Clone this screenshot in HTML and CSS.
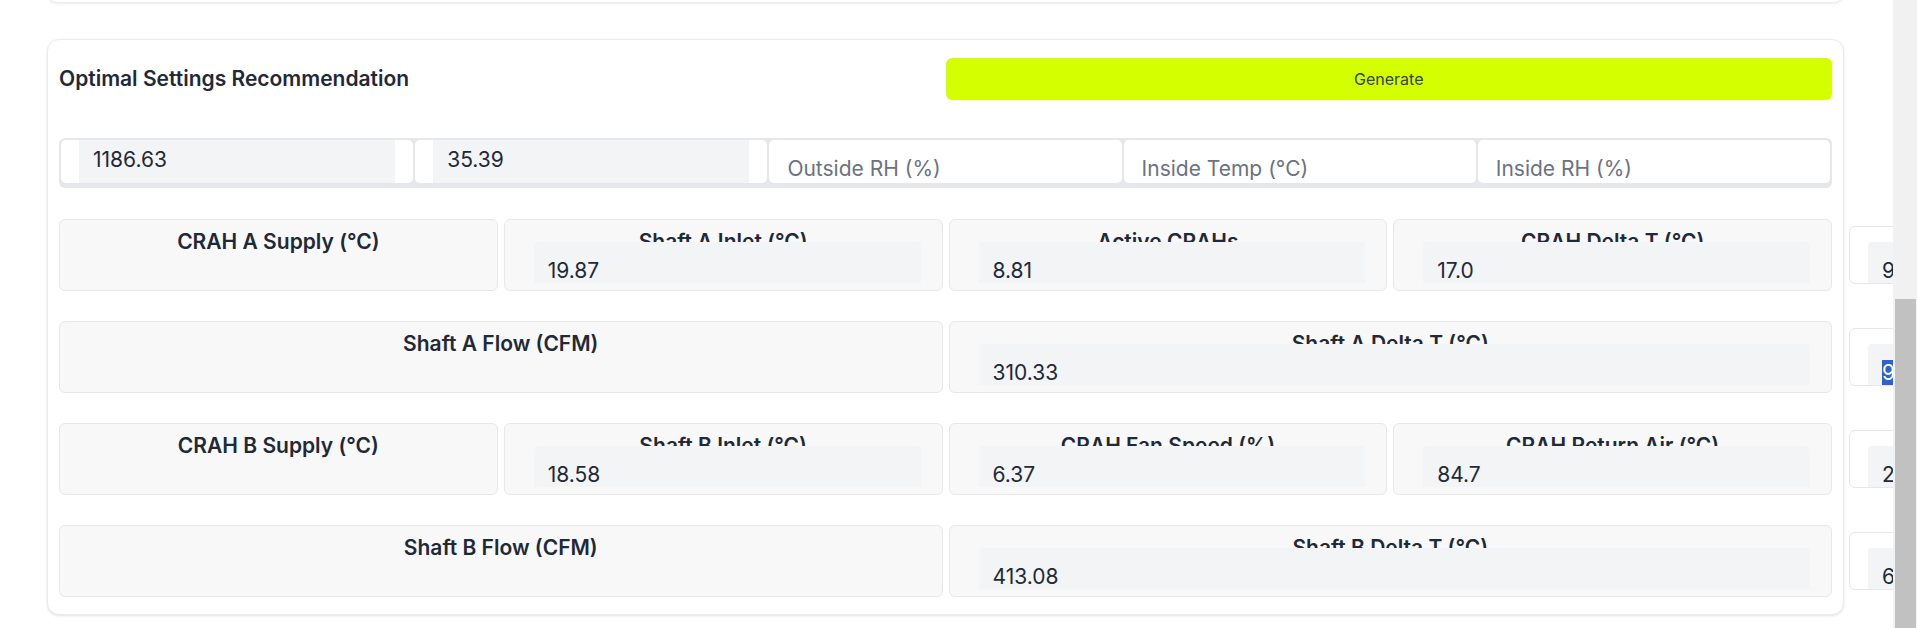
FILE: index.html
```html
<!DOCTYPE html>
<html lang="en">
<head>
<meta charset="utf-8">
<title>Optimal Settings Recommendation</title>
<link rel="stylesheet" href="styles.css">
</head>
<body>
<div class="viewport">
  <main class="page">
    <div class="prev-card"></div>
    <section class="card">
      <div class="card-head">
        <h2 class="title">Optimal Settings Recommendation</h2>
        <button class="btn" type="button">Generate</button>
      </div>
      <div class="inputs">
        <div class="in-box"><div class="in-fill">1186.63</div></div>
        <div class="in-box"><div class="in-fill">35.39</div></div>
        <div class="in-box"><div class="in-ph">Outside RH (%)</div></div>
        <div class="in-box"><div class="in-ph">Inside Temp (°C)</div></div>
        <div class="in-box"><div class="in-ph">Inside RH (%)</div></div>
      </div>

      <div class="row">
        <div class="grid grid-4">
          <div class="cell"><div class="label">CRAH A Supply (°C)</div></div>
          <div class="cell"><div class="label">Shaft A Inlet (°C)</div><div class="val">19.87</div></div>
          <div class="cell"><div class="label">Active CRAHs</div><div class="val">8.81</div></div>
          <div class="cell"><div class="label">CRAH Delta T (°C)</div><div class="val">17.0</div></div>
        </div>
        <div class="extra"><div class="extra-val">9</div></div>
      </div>

      <div class="row">
        <div class="grid grid-2">
          <div class="cell"><div class="label">Shaft A Flow (CFM)</div></div>
          <div class="cell"><div class="label">Shaft A Delta T (°C)</div><div class="val">310.33</div></div>
        </div>
        <div class="extra"><div class="extra-val"><span class="sel">9</span></div></div>
      </div>

      <div class="row">
        <div class="grid grid-4">
          <div class="cell"><div class="label">CRAH B Supply (°C)</div></div>
          <div class="cell"><div class="label">Shaft B Inlet (°C)</div><div class="val">18.58</div></div>
          <div class="cell"><div class="label">CRAH Fan Speed (%)</div><div class="val">6.37</div></div>
          <div class="cell"><div class="label">CRAH Return Air (°C)</div><div class="val">84.7</div></div>
        </div>
        <div class="extra"><div class="extra-val">2</div></div>
      </div>

      <div class="row">
        <div class="grid grid-2">
          <div class="cell"><div class="label">Shaft B Flow (CFM)</div></div>
          <div class="cell"><div class="label">Shaft B Delta T (°C)</div><div class="val">413.08</div></div>
        </div>
        <div class="extra"><div class="extra-val">6</div></div>
      </div>
    </section>
  </main>
  <div class="scrollbar"><div class="thumb"></div></div>
</div>
</body>
</html>
```
FILE: styles.css
```css
* { box-sizing: border-box; }

html, body {
  margin: 0;
  padding: 0;
  height: 100%;
  overflow: hidden;
  background: #ffffff;
  font-family: Inter, "Noto Sans", "Liberation Sans", sans-serif;
  color: #1f2937;
}

.viewport {
  display: flex;
  height: 628px;
  width: 100%;
}

.page {
  flex: 1;
  min-width: 0;
  overflow: hidden;
  padding: 0 49px 0 47px;
}

.prev-card {
  height: 20px;
  margin-top: -17px;
  margin-bottom: 36px;
  background: #fff;
  border: 1px solid #ececec;
  border-radius: 12px;
  box-shadow: 0 1px 3px rgba(0, 0, 0, 0.08);
}

.card {
  background: #fff;
  border: 1px solid #ebebeb;
  border-radius: 12px;
  box-shadow: 0 1px 3px rgba(0, 0, 0, 0.08), 0 1px 2px rgba(0, 0, 0, 0.04);
  padding: 18px 11px 17px 11px;
}

.card-head {
  display: grid;
  grid-template-columns: 1fr 1fr;
  align-items: center;
}

.title {
  margin: 0;
  font-size: 21px;
  font-weight: 600;
  line-height: 28px;
  color: #1f2937;
}

.btn {
  height: 42px;
  border: none;
  border-radius: 6px;
  background: #d4ff00;
  font-family: Inter, "Noto Sans", "Liberation Sans", sans-serif;
  font-size: 16px;
  color: #374151;
  padding: 0;
}

.inputs {
  margin-top: 38px;
  display: grid;
  grid-template-columns: repeat(5, 1fr);
  gap: 2px;
  padding: 2px 2px 5px;
  background: #e5e7eb;
  border-radius: 6px;
  height: 50px;
}

.in-box {
  background: #fff;
  border-radius: 5px;
  height: 43px;
  overflow: hidden;
}

.in-fill {
  margin: 0 18px;
  height: 100%;
  background: #f3f4f6;
  padding: 8px 14px 0;
  font-size: 21px;
  line-height: 24px;
  color: #1f2937;
}

.in-ph {
  padding: 17px 18px 0;
  font-size: 21px;
  line-height: 24px;
  color: #6b7280;
}

.row {
  display: flex;
  margin-top: 30px;
}

.inputs + .row { margin-top: 31px; }

.grid {
  flex: none;
  width: 100%;
  display: grid;
  gap: 6px;
}

.grid-4 { grid-template-columns: repeat(4, 1fr); }
.grid-2 { grid-template-columns: repeat(2, 1fr); }

.cell {
  height: 72px;
  background: #f8f8f8;
  border: 1px solid #e8e8e8;
  border-radius: 6px;
  padding-top: 8px;
  overflow: hidden;
}

.label {
  text-align: center;
  font-size: 21px;
  font-weight: 600;
  line-height: 28px;
  color: #1f2937;
  white-space: nowrap;
}

.val {
  position: relative;
  margin: -14px 21px 0 29px;
  height: 41px;
  background: #f3f4f6;
  border-radius: 4px 4px 0 0;
  padding: 17px 14px 0;
  font-size: 21px;
  line-height: 24px;
  color: #1f2937;
  overflow: hidden;
}

.extra {
  flex: none;
  width: 80px;
  margin: 7px 0 0 17px;
  height: 58px;
  background: #fff;
  border: 1px solid #e5e7eb;
  border-radius: 6px;
  padding: 15px 0 0 18px;
  overflow: hidden;
}

.extra-val {
  height: 60px;
  background: #f3f4f6;
  border-radius: 4px 0 0 0;
  padding: 17px 14px 0;
  font-size: 21px;
  line-height: 24px;
  color: #1f2937;
}

.sel {
  background: #2e62d1;
  color: #fff;
}

.scrollbar {
  flex: none;
  width: 24px;
  height: 628px;
  background: #f1f1f1;
  display: flex;
  flex-direction: column;
  justify-content: flex-end;
  padding-left: 2px;
  padding-right: 1px;
}

.thumb {
  height: 329px;
  background: #c1c1c1;
}
```
